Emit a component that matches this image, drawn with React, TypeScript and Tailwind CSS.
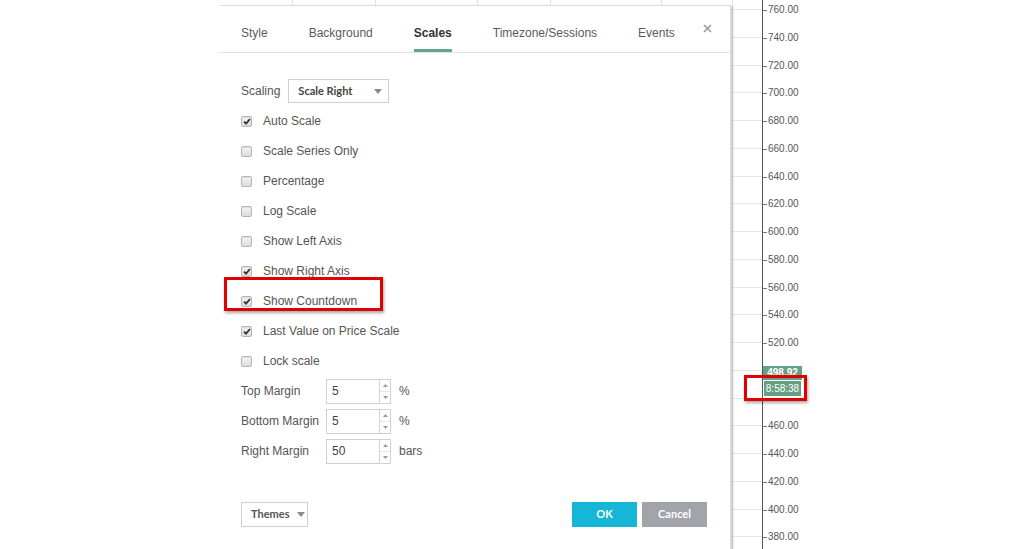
import React from 'react';

const prices = [760, 740, 720, 700, 680, 660, 640, 620, 600, 580, 560, 540, 520, 500, 480, 460, 440, 420, 400, 380];
const priceY = (v: number) => 9 + ((760 - v) / 20) * 27.75;

const tabs = ['Style', 'Background', 'Scales', 'Timezone/Sessions', 'Events'];

const options = [
  { label: 'Auto Scale', checked: true },
  { label: 'Scale Series Only', checked: false },
  { label: 'Percentage', checked: false },
  { label: 'Log Scale', checked: false },
  { label: 'Show Left Axis', checked: false },
  { label: 'Show Right Axis', checked: true },
  { label: 'Show Countdown', checked: true },
  { label: 'Last Value on Price Scale', checked: true },
  { label: 'Lock scale', checked: false },
];

const margins = [
  { label: 'Top Margin', value: '5', unit: '%' },
  { label: 'Bottom Margin', value: '5', unit: '%' },
  { label: 'Right Margin', value: '50', unit: 'bars' },
];

const Caret: React.FC = () => (
  <svg width="8" height="5" viewBox="0 0 8 5" className="shrink-0">
    <path d="M0 0 L8 0 L4 5 Z" fill="#8a8a8a" />
  </svg>
);

const Checkbox: React.FC<{ checked: boolean }> = ({ checked }) => (
  <span className="flex h-[11px] w-[11px] shrink-0 items-center justify-center rounded-[2px] border border-[#b5b5b5] bg-gradient-to-b from-[#f4f4f4] to-[#dcdcdc] shadow-[inset_0_1px_1px_rgba(0,0,0,0.08)]">
    {checked && (
      <svg width="8" height="7" viewBox="0 0 8 7">
        <path d="M1 3.6 L3 5.6 L7 1" fill="none" stroke="#333" strokeWidth="1.8" />
      </svg>
    )}
  </span>
);

const Spinner: React.FC = () => (
  <div className="flex w-[11px] flex-col border-l border-[#d4d4d4]">
    <div className="flex flex-1 items-center justify-center border-b border-[#e6e6e6]">
      <svg width="5" height="3" viewBox="0 0 5 3">
        <path d="M0 3 L5 3 L2.5 0 Z" fill="#999" />
      </svg>
    </div>
    <div className="flex flex-1 items-center justify-center">
      <svg width="5" height="3" viewBox="0 0 5 3">
        <path d="M0 0 L5 0 L2.5 3 Z" fill="#999" />
      </svg>
    </div>
  </div>
);

const Dialog: React.FC = () => (
  <div className="absolute left-0 top-[5px] flex h-[560px] w-[512px] flex-col border-t border-r border-[#dcdcdc] bg-white shadow-[3px_0_2px_-1px_rgba(0,0,0,0.18)]">
    {/* tabs */}
    <div className="flex h-[47px] shrink-0 border-b border-[#e3e3e3] pl-[22px]">
      <div className="flex gap-[41px]">
        {tabs.map((t) => (
          <div key={t} className="relative flex h-full items-start pt-[20px]">
            <span
              className={`text-[12px] leading-[15px] ${
                t === 'Scales' ? 'font-bold text-[#333]' : 'text-[#5a5a5a]'
              }`}
            >
              {t}
            </span>
            {t === 'Scales' && <div className="absolute bottom-0 left-0 right-0 h-[3px] bg-[#5fa98a]" />}
          </div>
        ))}
      </div>
      <button className="ml-auto mr-[18px] mt-[18px] self-start p-0">
        <svg width="9" height="9" viewBox="0 0 9 9">
          <path d="M1 1 L8 8 M8 1 L1 8" stroke="#9a9a9a" strokeWidth="1.6" />
        </svg>
      </button>
    </div>

    {/* body */}
    <div className="relative flex flex-col pl-[22px] pr-[23px] pt-[23px] text-[12px] text-[#555]">
      <div className="flex h-[30px] items-center gap-[8px]">
        <span>Scaling</span>
        <div className="flex h-[24px] w-[101px] items-center justify-between border border-[#cfcfcf] pl-[9px] pr-[6px]">
          <span className="font-['Lato',sans-serif] text-[11px] font-bold text-[#444]">Scale Right</span>
          <Caret />
        </div>
      </div>

      {options.map((o) => (
        <div key={o.label} className="flex h-[30px] items-center gap-[11px]">
          <Checkbox checked={o.checked} />
          <span>{o.label}</span>
        </div>
      ))}

      {margins.map((m) => (
        <div key={m.label} className="flex h-[30px] items-center">
          <span className="w-[85px] shrink-0">{m.label}</span>
          <div className="flex h-[25px] w-[65px] border border-[#d0d0d0]">
            <span className="flex flex-1 items-center pl-[5px] text-[#444]">{m.value}</span>
            <Spinner />
          </div>
          <span className="ml-[8px]">{m.unit}</span>
        </div>
      ))}

      {/* footer */}
      <div className="mt-[36px] flex items-center font-['Lato',sans-serif] text-[11px] font-bold">
        <div className="flex h-[25px] w-[67px] items-center gap-[7px] border border-[#cfcfcf] pl-[9px] text-[#555]">
          <span>Themes</span>
          <Caret />
        </div>
        <div className="ml-auto flex gap-[5px]">
          <button className="h-[25px] w-[65px] bg-[#15b6d6] text-white">OK</button>
          <button className="h-[25px] w-[65px] bg-[#a1a4a9] text-white">Cancel</button>
        </div>
      </div>

      {/* highlight */}
      <div className="absolute left-[5px] top-[224px] h-[34px] w-[159px] border-[3px] border-[#e00000] shadow-[1px_2px_3px_rgba(0,0,0,0.35)]" />
    </div>
  </div>
);

const App: React.FC = () => {
  return (
    <div className="relative flex h-[549px] w-[1027px] overflow-hidden bg-white font-['Liberation_Sans',Arial,sans-serif]">
      <div className="w-[219px] shrink-0" />

      {/* chart pane */}
      <div className="relative w-[543px] shrink-0">
        <svg className="absolute inset-0" width="543" height="549">
          {[73, 156, 258, 331, 442, 513].map((x) => (
            <line key={x} x1={x + 0.5} y1={0} x2={x + 0.5} y2={549} stroke="#e2e2e2" />
          ))}
          {prices.map((p) => (
            <line key={p} x1={0} y1={Math.round(priceY(p)) + 0.5} x2={543} y2={Math.round(priceY(p)) + 0.5} stroke="#e6e6e6" />
          ))}
        </svg>
        <Dialog />
      </div>

      {/* price axis */}
      <div className="relative flex-1 border-l border-[#555] text-[10px] text-[#555]">
        {prices
          .filter((p) => p !== 500 && p !== 480)
          .map((p) => (
            <div
              key={p}
              className="absolute left-0 flex items-center leading-[12px]"
              style={{ top: Math.round(priceY(p)) - 5 }}
            >
              <span className="h-px w-[4px] bg-[#777]" />
              <span className="ml-[1px]">{p.toFixed(2)}</span>
            </div>
          ))}
        <div className="absolute left-0 top-[366px] flex h-[14px] w-[39px] items-center justify-center bg-[#66a084] text-[10px] font-bold leading-[12px] text-white">
          498.92
        </div>
        <div className="absolute left-0 top-[380px] flex h-[17px] w-[39px] items-center justify-center border border-white bg-[#66a084] text-[10px] leading-[12px] text-white">
          8:58:38
        </div>
      </div>

      {/* countdown highlight */}
      <div className="absolute left-[744px] top-[375px] h-[26px] w-[63px] border-[3px] border-[#e00000] shadow-[1px_2px_3px_rgba(0,0,0,0.35)]" />
    </div>
  );
};

export default App;
